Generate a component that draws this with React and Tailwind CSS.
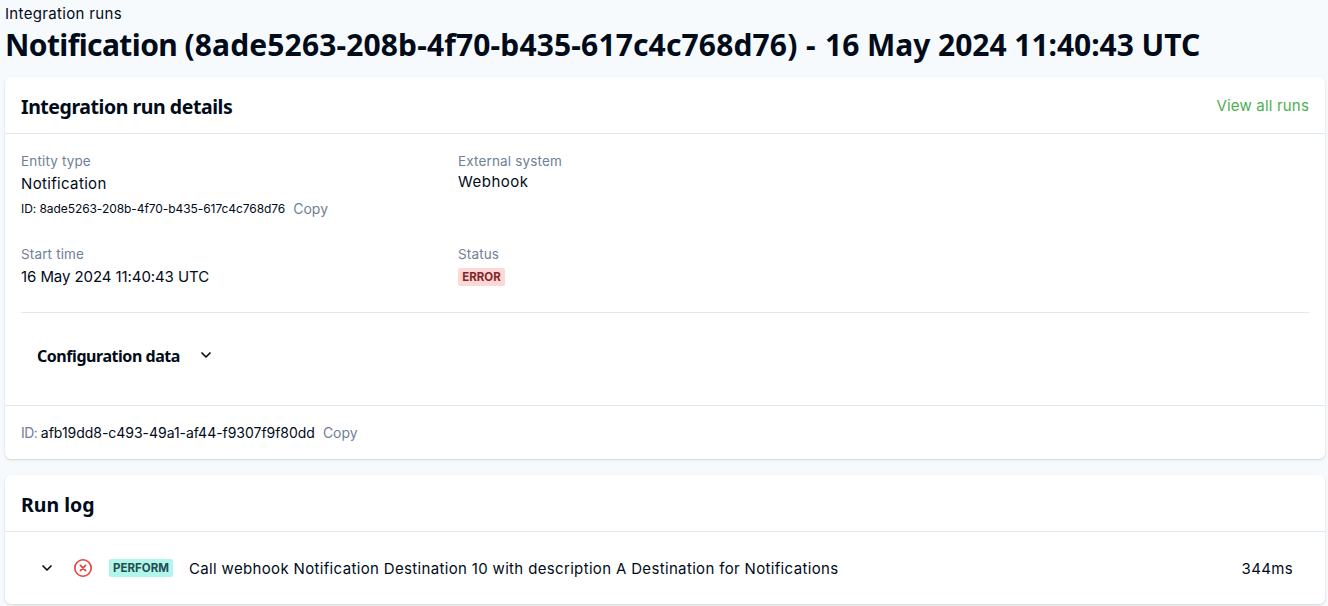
import React from 'react';
import { ChevronDown } from 'lucide-react';

function Card({ children }) {
    return (
        <section className="bg-white rounded-md shadow-[0_1px_3px_0_rgba(0,0,0,0.1),0_1px_2px_0_rgba(0,0,0,0.06)]">
            {children}
        </section>
    );
}

function CardTitle({ children, className = 'tracking-[-0.45px]' }) {
    return (
        <h2 className={`pt-1 font-['Noto_Sans',sans-serif] text-[19.5px] leading-6 font-bold ${className}`}>
            {children}
        </h2>
    );
}

function Label({ children }) {
    return (
        <div className="text-[13.5px] leading-[21px] tracking-[0.15px] text-[#718096]">{children}</div>
    );
}

function CopyButton() {
    return (
        <button className="ml-2 text-[14px] leading-5 tracking-normal text-[#718096]">Copy</button>
    );
}

function ErrorIcon() {
    return (
        <svg width="18" height="18" viewBox="0 0 18 18" fill="none" stroke="#e53e3e" strokeWidth="1.6" strokeLinecap="round">
            <circle cx="9" cy="9" r="8.2" />
            <path d="M6.4 6.4l5.2 5.2M11.6 6.4l-5.2 5.2" />
        </svg>
    );
}

export default function App() {
    return (
        <div className="h-[606px] overflow-hidden bg-[#f7fafc] pl-[5px] pr-[3px] pt-[2px] font-['Inter',sans-serif] text-[15px] tracking-[0.34px] text-[#010b19]">
            <nav className="h-6 leading-6">Integration runs</nav>
            <h1 className="h-[51px] whitespace-nowrap font-['Noto_Sans',sans-serif] text-[30px] leading-[38px] font-bold tracking-[-0.04px]">
                <span className="tracking-[-0.6px]">Notification </span>
                <span className="tracking-[0.14px]">(8ade5263-208b-4f70-b435-617c4c768d76)</span>
                <span className="tracking-[0.8px]"> - </span>
                16 May 2024 11:40:43 UTC
            </h1>

            <div className="flex flex-col gap-4">
                <Card>
                    <header className="flex h-[57px] items-center justify-between border-b border-[#e2e8f0] px-4">
                        <CardTitle>Integration run details</CardTitle>
                        <a href="#" className="pt-[2px] leading-6 tracking-[0.18px] text-[#4caf50]">View all runs</a>
                    </header>

                    <div className="px-4 pt-[17px]">
                        <div className="grid grid-cols-[437px_1fr]">
                            <div className="h-[93px]">
                                <Label>Entity type</Label>
                                <div className="leading-6">Notification</div>
                                <div className="flex items-center pt-[3px]">
                                    <span className="text-[12px] leading-5 tracking-[-0.07px]">ID: 8ade5263-208b-4f70-b435-617c4c768d76</span>
                                    <CopyButton />
                                </div>
                            </div>
                            <div>
                                <Label>External system</Label>
                                <div className="leading-5 tracking-[0.5px]">Webhook</div>
                            </div>
                            <div className="h-[68px]">
                                <Label>Start time</Label>
                                <div className="leading-6 tracking-[-0.08px]">16 May 2024 11:40:43 UTC</div>
                            </div>
                            <div>
                                <Label>Status</Label>
                                <div className="mt-[3px] flex h-[18px] w-[47px] items-center justify-center rounded-xs bg-[#fed7d7] pt-px text-[11.5px] leading-none font-bold tracking-normal text-[#822727]">
                                    ERROR
                                </div>
                            </div>
                        </div>
                        <div className="flex h-[93px] items-center gap-[18px] border-t border-[#e2e8f0] pb-[7px] pl-4">
                            <h3 className="font-['Noto_Sans',sans-serif] text-[16px] leading-5 font-bold tracking-[-0.45px]">Configuration data</h3>
                            <ChevronDown size={16} strokeWidth={2.5} className="mb-px" />
                        </div>
                    </div>

                    <footer className="flex h-[54px] items-center border-t border-[#e2e8f0] px-4">
                        <span className="text-[14px] leading-5 tracking-[-0.03px]">
                            <span className="tracking-[-0.5px] text-[#718096]">ID: </span>
                            afb19dd8-c493-49a1-af44-f9307f9f80dd
                        </span>
                        <CopyButton />
                    </footer>
                </Card>

                <Card>
                    <header className="flex h-[57px] items-center border-b border-[#e2e8f0] px-4">
                        <CardTitle className="tracking-[0px]">Run log</CardTitle>
                    </header>
                    <div className="flex h-[72px] items-center pl-[34px] pr-8">
                        <ChevronDown size={16} strokeWidth={2.5} />
                        <div className="ml-[19px]"><ErrorIcon /></div>
                        <div className="ml-[17px] flex h-[18px] w-16 items-center justify-center rounded-xs bg-[#b2f5ea] pt-px text-[11.5px] leading-none font-bold tracking-normal text-[#234e52]">
                            PERFORM
                        </div>
                        <span className="ml-4 pt-[2px]">Call webhook Notification Destination 10 with description A Destination for Notifications</span>
                        <span className="ml-auto pt-[2px]">344ms</span>
                    </div>
                </Card>
            </div>
        </div>
    );
}
